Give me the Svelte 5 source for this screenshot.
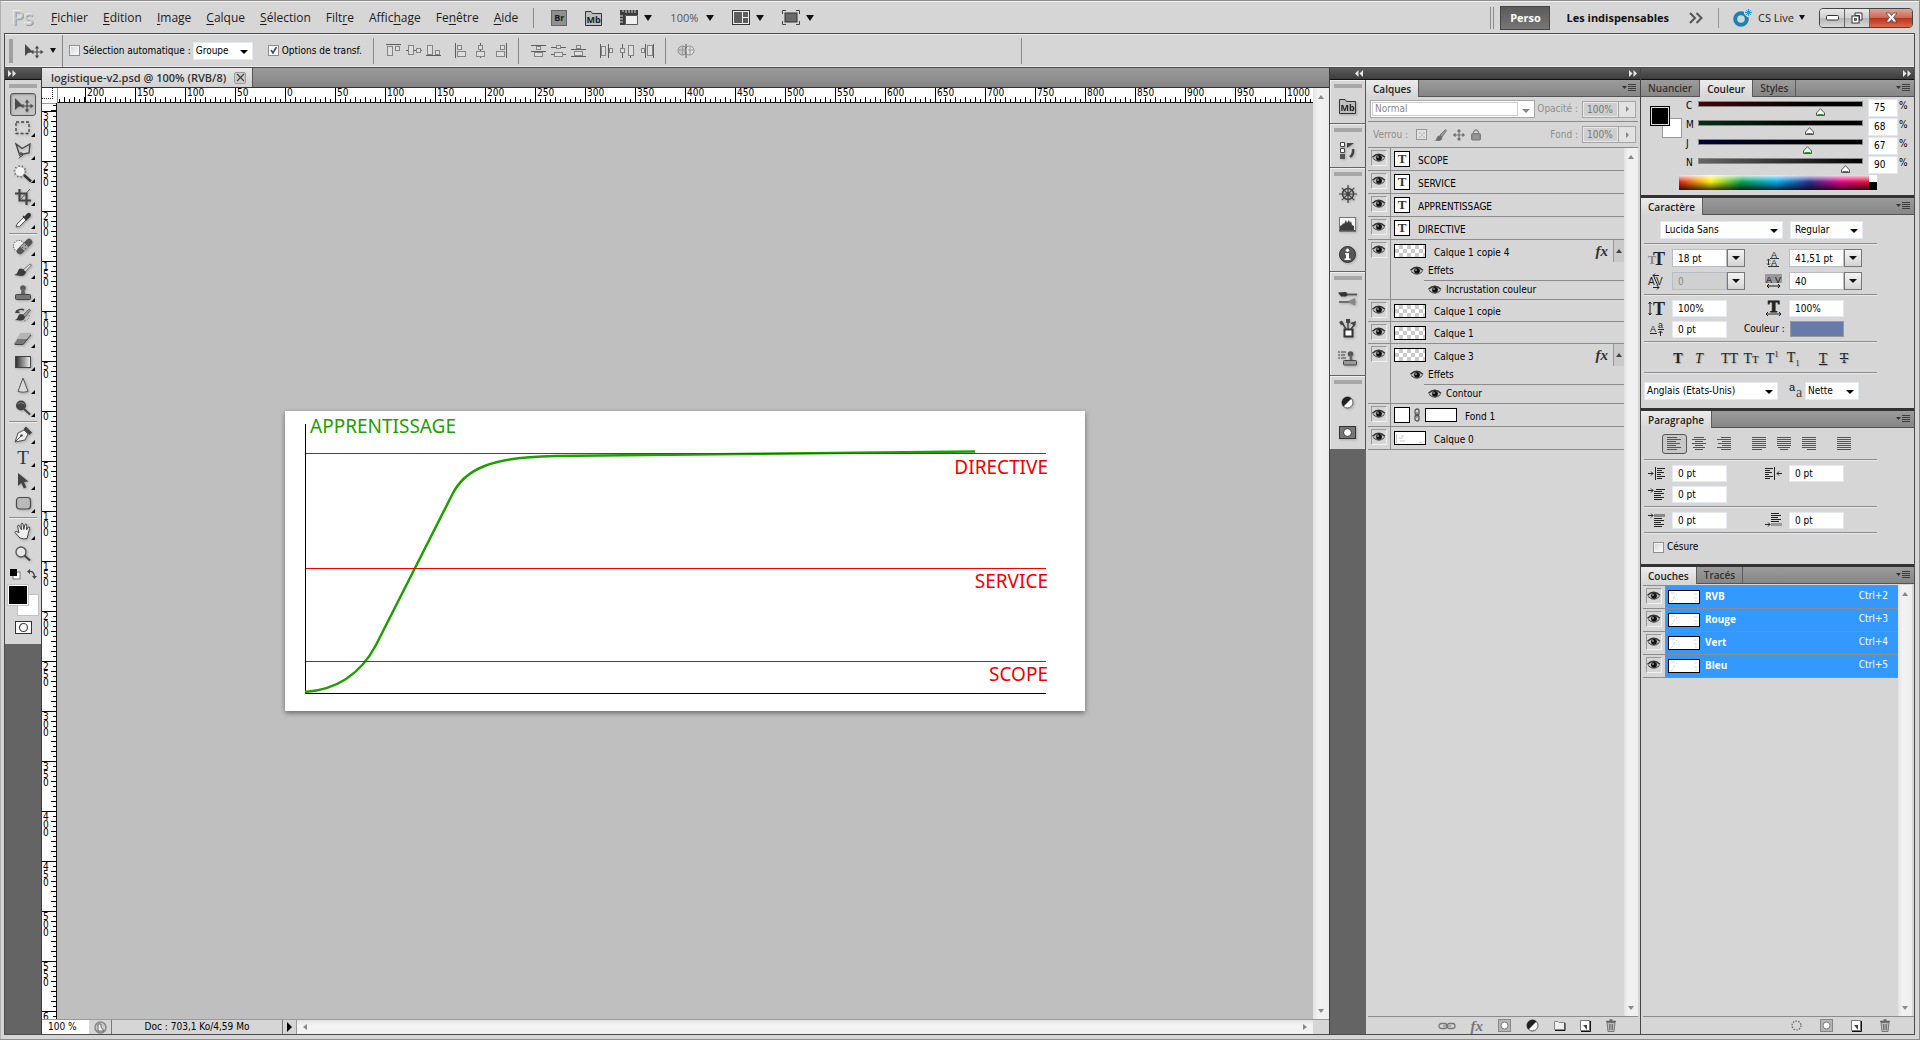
<script>
  const menus = [
    ['', 'F', 'ichier'], ['', 'E', 'dition'], ['', 'I', 'mage'], ['', 'C', 'alque'], ['', 'S', 'élection'],
    ['Filt', 'r', 'e'], ['Affic', 'h', 'age'], ['Fe', 'n', 'être'], ['', 'A', 'ide']
  ];

  const box = (x, y, w, h) =>
    `<rect x="${x + 0.5}" y="${y + 0.5}" width="${w - 1}" height="${h - 1}" fill="#dedede" stroke="#858585"/>`;
  const bar = (x, y, w, h, c = '#5e5e5e') => `<rect x="${x}" y="${y}" width="${w}" height="${h}" fill="${c}"/>`;
  const textLines = (widths, mode, c = '#555') =>
    widths.map((w, i) => {
      const x = mode === 'l' ? 0 : mode === 'r' ? 14 - w : (14 - w) / 2;
      return bar(x, i * 2, w, 1, c);
    }).join('');

  // name: [width, height, markup]
  const icons = {
    move: [18, 14, '<path d="M1 0v12l3-3 5-1z" fill="#4a4a4a"/><path d="M13 3v10M8 8h10M11.500 4.500L13 2.500l1.500 2M11.500 11.500L13 13.500l1.500-2M9.500 6.500L7.500 8l2 1.500M16.500 6.500l2 1.500-2 1.500" fill="none" stroke="#4a4a4a" stroke-width="1.2"/>'],
    marquee: [16, 14, '<rect x="1" y="1" width="13" height="11.500" fill="none" stroke="#444" stroke-width="1.300" stroke-dasharray="3 2"/>'],
    lasso: [16, 16, '<path d="M1 1l6 4.500L15 1l-1 9-8 1.500L4 10z" fill="none" stroke="#444" stroke-width="1.300"/><circle cx="6" cy="11.500" r="1.800" fill="none" stroke="#444"/><path d="M6 13l-2 2.500" stroke="#444"/>'],
    wand: [20, 18, '<circle cx="7" cy="6.500" r="4.500" fill="#f3f3f3"/><circle cx="7" cy="6.500" r="5.500" fill="none" stroke="#555" stroke-width="1.800" stroke-dasharray="1 2.400"/><path d="M11 10l7 6.500" stroke="#333" stroke-width="2.400"/>'],
    crop: [16, 16, '<path d="M4.500 0v11.500H16M0 4.500h11.500V16" fill="none" stroke="#444" stroke-width="2.200"/><path d="M5 11L15 0" stroke="#555"/>'],
    dropper: [16, 16, '<path d="M1 15l1-3 7-7 2.500 2.500-7 7z" fill="#f2f2f2" stroke="#555"/><path d="M8 4l4 4M9.500 5.500l3-3.500q1.500-1 2.500 0 .8 1-.3 2.500L11 8z" fill="#333" stroke="#333" stroke-width="1.300"/>'],
    heal: [20, 17, '<circle cx="6" cy="8" r="5.500" fill="#eee" stroke="#333" stroke-dasharray="1 1.500"/><path d="M7 13l9-9" stroke="#555" stroke-width="6.500" stroke-linecap="round"/><path d="M9.500 11l4-4" stroke="#a5a5a5" stroke-width="6"/><path d="M9 9l1 1M12 7l1 1M12 10l1 1" stroke="#555"/>'],
    brush: [18, 14, '<path d="M9 7l7-6 1.500 1L11 9z" fill="#ddd" stroke="#777"/><path d="M0 12q3-.5 4-4t5-2l3 3q-1 4-5 4z" fill="#3c3c3c"/>'],
    stamp: [16, 16, '<circle cx="8" cy="3" r="2.800" fill="#5a5a5a"/><path d="M6.800 4h2.400l1 5H5.800z" fill="#666"/><rect x=".5" y="9.500" width="15" height="5" rx="1" fill="#777" stroke="#444"/>'],
    history: [18, 15, '<path d="M2 4q4-4 8-2" fill="none" stroke="#444" stroke-width="1.500"/><path d="M1 5l5 0-3-3.500z" fill="#444"/><path d="M9 7l6-6 1.500 1L11 9z" fill="#999" stroke="#555" stroke-width=".7"/><path d="M0 12q3 0 4-3.500t5-2l2 2.500q-1 4-5 3.500z" fill="#3c3c3c"/><path d="M15 7q1 5-5 6" fill="none" stroke="#555" stroke-dasharray="1 1.500"/>'],
    eraser: [18, 14, '<path d="M0 12l7-11h10l-5 8.500L9 13H1z" fill="#777"/><path d="M7 1h10l-4 6H3z" fill="#b5b5b5"/><path d="M1 12.500h8L17 3" fill="none" stroke="#444"/>'],
    gradient: [16, 12, '<defs><linearGradient id="tool-gradient"><stop stop-color="#2b2b2b"/><stop offset="1" stop-color="#f4f4f4"/></linearGradient></defs><rect x=".5" y=".5" width="15" height="11" fill="url(#tool-gradient)" stroke="#444"/>'],
    blur: [12, 16, '<path d="M6 1l5 13.500q-5 1.500-10 0z" fill="#dcdcdc" stroke="#555"/>'],
    dodge: [16, 16, '<circle cx="6" cy="5.500" r="5" fill="#444"/><path d="M2.500 4q3-3 7 0" stroke="#888" fill="none"/><path d="M9 9l6 5.500" stroke="#444" stroke-width="1.800"/>'],
    pen: [18, 17, '<path d="M1 16l3-9 6-3 4 4-3 6z" fill="#efefef" stroke="#555"/><path d="M1 16l6-6" stroke="#555"/><circle cx="7.500" cy="9.500" r="1.200" fill="#444"/><path d="M9.500 3l2.500-2.500 6 6L15.500 9z" fill="#444"/>'],
    select: [12, 16, '<path d="M1 0v13l3.200-3 2.600 5.500 2.500-1.200L7 9l4.500-.5z" fill="#444"/>'],
    shape: [15, 13, '<rect x=".5" y=".5" width="14" height="11.500" rx="3" fill="#b9b9b9" stroke="#4a4a4a" stroke-width="1.200"/>'],
    hand: [18, 18, '<path d="M6 16L1 10.500q0-1.800 2-1l2 1.500L3.500 4Q4 2.500 5.200 3.500L7.500 8 7 2q.8-1.500 2 0l.8 5.500L11 2.500q1-1.200 1.800.2L12.500 8l1.800-3q1.400-.5 1.500 1l-1.500 5.500L13 16.500q-3.500 1-7-.5z" fill="#f0f0f0" stroke="#444"/>'],
    zoom: [16, 16, '<circle cx="6" cy="6" r="5" fill="#e6e6e6" stroke="#555" stroke-width="1.300"/><path d="M9.500 9.500l5.500 5" stroke="#444" stroke-width="2"/>'],
    reset: [10, 10, '<rect x="3" y="3" width="7" height="7" fill="#fff" stroke="#777"/><rect width="7" height="7" fill="#000"/>'],
    swap: [10, 10, '<path d="M2 2.500q5-1 5.500 5" fill="none" stroke="#444" stroke-width="1.400"/><path d="M0 2.500L3 0v5zM5 7h5L7.500 10z" fill="#444"/>'],
    quick: [17, 13, '<rect x=".5" y=".5" width="16" height="12" fill="#fff" stroke="#333"/><circle cx="8.500" cy="6.500" r="4" fill="#fff" stroke="#444" stroke-width="1.200"/>'],

    ruler: [18, 15, '<path d="M0 0h18v5H5v10H0z" fill="#3c3c3c"/><path d="M5.500 5.500h12v9h-12z" fill="#f0f0f0" stroke="#555"/><path d="M3 0v2M6 0v3M9 0v3M12 0v3M15 0v3M0 6h3M0 9h3M0 12h3" stroke="#ddd"/>'],
    arrange: [18, 15, '<rect x=".5" y=".5" width="17" height="14" fill="#eee" stroke="#333"/><path d="M2 2h8v11H2zM11 2h5v5h-5zM11 8h5v5h-5z" fill="#5d5d5d"/>'],
    screen: [18, 15, '<path d="M.5 4V.5H4M14 .5h3.500V4M17.500 11v3.500H14M4 14.500H.5V11" fill="none" stroke="#444"/><rect x="3" y="3" width="12" height="9" fill="#6b6b6b" stroke="#333"/>'],
    live: [20, 19, '<circle cx="8" cy="11" r="5.800" fill="none" stroke="#1c82b0" stroke-width="4"/><path d="M15.500 0v9M11 4.500h9M12.500 1.500l6 6M18.500 1.500l-6 6" stroke="#d6d6d6" stroke-width="3"/><path d="M15.500 1v7M12 4.500h7M13 2l5 5M18 2l-5 5" stroke="#1c9bd0"/>'],
    more: [14, 12, '<path d="M1 1l5 5-5 5M7.500 1l5 5-5 5" fill="none" stroke="#555" stroke-width="2"/>'],
    min: [13, 6, '<rect x=".5" y=".5" width="12" height="4.500" rx="1" fill="#fff" stroke="#333"/>'],
    restore: [12, 12, '<path d="M4 1h7v7H8.500V3.500H4z" fill="#fff" stroke="#333"/><rect x="1" y="4" width="7" height="7" fill="#fff" stroke="#333"/><rect x="3.500" y="6.500" width="2" height="2" fill="#777" stroke="#333" stroke-width=".7"/>'],
    close: [13, 11, '<path d="M1 1h3.500L6.500 3.500 8.500 1H12L8.500 5.500 12 10H8.500L6.500 7.500 4.500 10H1L4.500 5.500z" fill="#fff" stroke="#444" stroke-width=".8"/>'],

    alTop: [16, 13, bar(0, 0, 15, 1) + box(1, 2, 6, 10) + box(9, 2, 5, 5)],
    alMid: [16, 13, bar(0, 6, 16, 1) + box(2, 1, 6, 10) + box(10, 4, 5, 5)],
    alBot: [16, 13, bar(0, 11, 15, 1) + box(1, 1, 6, 10) + box(9, 6, 5, 5)],
    alLeft: [12, 15, bar(0, 0, 1, 15) + box(2, 2, 5, 5) + box(2, 8, 9, 6)],
    alCen: [12, 15, bar(5, 0, 1, 15) + box(3, 2, 5, 5) + box(1, 8, 9, 6)],
    alRight: [12, 15, bar(11, 0, 1, 15) + box(5, 2, 5, 5) + box(1, 8, 9, 6)],
    diTop: [16, 14, bar(0, 1, 15, 1) + box(5, 2, 5, 4) + bar(0, 7, 15, 1) + box(3, 8, 9, 5)],
    diMid: [16, 14, bar(0, 3, 15, 1) + box(5, 1, 5, 4) + bar(0, 10, 15, 1) + box(3, 8, 9, 5)],
    diBot: [16, 14, bar(0, 5, 15, 1) + box(5, 1, 5, 4) + bar(0, 12, 15, 1) + box(3, 7, 9, 5)],
    diLeft: [14, 14, bar(0, 0, 1, 14) + box(1, 2, 5, 10) + bar(8, 0, 1, 14) + box(9, 4, 4, 5)],
    diCen: [14, 14, bar(2, 0, 1, 14) + box(0, 4, 5, 5) + bar(10, 1, 1, 13) + box(8, 1, 6, 11)],
    diRight: [14, 14, bar(5, 0, 1, 14) + box(1, 4, 4, 5) + bar(13, 0, 1, 14) + box(7, 1, 6, 11)],
    auto: [16, 14, '<circle cx="4.500" cy="6.500" r="4.500" fill="#c8c8c8" stroke="#8a8a8a"/><circle cx="11.500" cy="6.500" r="4.500" fill="#e2e2e2" stroke="#8a8a8a"/><path d="M1 6h5M10 6h5M4.500 3v8M12 3v8" stroke="#999"/><path d="M8 0v14" stroke="#555"/>'],

    bridge: [17, 16, '<path d="M.5 1.500H6l1.500 2h9v12H.5z" fill="#bdbdbd" stroke="#333"/><text x="8.500" y="13" font-size="9" font-weight="700" font-family="Open Sans,sans-serif" text-anchor="middle" fill="#222">Mb</text>'],
    steps: [15, 17, '<path d="M.5 .5h4v4h-4zM.5 6.500h4v4h-4z" fill="#fff" stroke="#444"/><rect y="12" width="5" height="5" fill="#555"/><path d="M10 15q4-3 3-8" fill="none" stroke="#444" stroke-width="2.500"/><path d="M7 6V1h7z" fill="#444"/>'],
    helm: [18, 18, '<circle cx="9" cy="9" r="5.500" fill="none" stroke="#444" stroke-width="1.500"/><circle cx="9" cy="9" r="2" fill="#444"/><path d="M9 0v18M0 9h18M2.800 2.800l12.400 12.400M15.200 2.800L2.800 15.200" stroke="#444" stroke-width="1.200"/>'],
    histo: [17, 14, '<rect x=".5" y=".5" width="16" height="13" fill="#f4f4f4" stroke="#777"/><path d="M1 13V9l2-1 1-2 1 1 2-4 1 3 2-3 1 3 1-2 1 4 2 1v4z" fill="#3d3d3d"/><path d="M0 14h17" stroke="#333"/>'],
    info: [17, 17, '<circle cx="8.500" cy="8.500" r="8" fill="#555" stroke="#333"/><circle cx="8.500" cy="4.200" r="1.700" fill="#fff"/><path d="M6 7h4v5.500h1.500V14H5.500v-1.500H7V8.500H6z" fill="#fff"/>'],
    brushes: [19, 15, '<path d="M0 1.500l8-.5 2 2.500-2 2H3z" fill="#333"/><path d="M9 3.500h10" stroke="#555" stroke-width="1.800"/><path d="M1 11h11" stroke="#666" stroke-width="1.800"/><path d="M11 9.500l6-2.500q1.500 4 0 7.500L11 12z" fill="#888"/>'],
    pot: [17, 18, '<path d="M5.500 10.500h8v7h-8z" fill="#fff" stroke="#333" stroke-width="2"/><path d="M7 10L2 2M9 10V3M12 10l4-5" stroke="#444" stroke-width="1.500"/><path d="M0 3l2 3 3-1L3 2zM7 0h4v4H7zM11 4l6-2-1 5z" fill="#444"/>'],
    cloneSrc: [19, 16, '<path d="M0 2h2M0 5h2M0 8h2M3 2h5M3 5h4M3 8h5" stroke="#444"/><circle cx="12.500" cy="4" r="2.800" fill="#555"/><path d="M12 5h1.500l1 5h-3z" fill="#666"/><rect x="5.500" y="10.500" width="13" height="4.500" rx="1" fill="#999" stroke="#444"/>'],
    adjust: [13, 13, '<circle cx="6.500" cy="6.500" r="5.500" fill="#fff" stroke="#555"/><path d="M2.500 10.500A5.500 5.500 0 0 1 10.500 2.500z" fill="#222"/>'],
    mask: [17, 13, '<rect x=".5" y=".5" width="16" height="12" fill="#777" stroke="#333"/><circle cx="8.500" cy="6.500" r="4" fill="#fff" stroke="#333"/>'],

    eye: [14, 10, '<path d="M0 4.500Q6-1 13.500 4.500 7 11.500 0 4.500z" fill="#bbb"/><path d="M.5 4.200Q6.500-1.500 13 4.200" fill="none" stroke="#333" stroke-width="1.400"/><path d="M1 5.500Q7 11 12.500 5.500" fill="none" stroke="#444"/><circle cx="7" cy="4.800" r="2.900" fill="#111"/><circle cx="6" cy="4" r=".8" fill="#ddd"/>'],
    lockPx: [12, 12, '<rect x=".5" y=".5" width="10" height="10" fill="#e6e6e6" stroke="#888"/><path d="M3 3h2v2H3zM7 3h2v2H7zM5 5h2v2H5zM3 7h2v2H3zM7 7h2v2H7z" fill="#c4c4c4"/>'],
    lockBrush: [13, 12, '<path d="M6 6l5.500-5.500 1 1L8 8z" fill="#888" stroke="#666"/><path d="M0 11.500q2.500-.5 3-3t3.500-2L8.500 9q-1 3-4 3z" fill="#555"/>'],
    lockAll: [10, 12, '<path d="M2.500 5V3q2.500-4 5 0v2" fill="none" stroke="#777" stroke-width="1.300"/><rect x=".5" y="4.500" width="9" height="6.500" rx="1" fill="#777" stroke="#666"/><path d="M2 7h6M2 9h6" stroke="#999"/>'],
    lockMove: [12, 12, '<path d="M6 1v10M1 6h10M4.500 2.500L6 .800l1.500 1.700M4.500 9.500L6 11.200l1.500-1.700M2.500 4.500L.8 6l1.700 1.500M9.500 4.500L11.200 6 9.500 7.500" fill="none" stroke="#555" stroke-width="1.200"/>'],
    chain: [8, 14, '<rect x="2" y="1" width="4" height="6" rx="2" fill="none" stroke="#555" stroke-width="1.300"/><rect x="2" y="7" width="4" height="6" rx="2" fill="none" stroke="#555" stroke-width="1.300"/><path d="M4 4v6" stroke="#555"/>'],
    link: [18, 8, '<rect x="1" y="1.500" width="8" height="5" rx="2.500" fill="none" stroke="#777" stroke-width="1.300"/><rect x="9" y="1.500" width="8" height="5" rx="2.500" fill="none" stroke="#777" stroke-width="1.300"/><path d="M5 4h8" stroke="#777"/>'],
    maskBtn: [13, 13, '<rect x=".5" y=".5" width="12" height="12" fill="#b5b5b5" stroke="#888"/><circle cx="6.500" cy="6.500" r="3.500" fill="#fff" stroke="#777"/>'],
    folder: [11, 11, '<path d="M.5 1.500H4l1 1h5.500v7H.5z" fill="#eee" stroke="#888"/><path d="M1 10.500h10V3" fill="none" stroke="#111"/>'],
    page: [11, 12, '<path d="M.5 .5h9v10h-9z" fill="#fff" stroke="#777"/><path d="M10.500 1v10.500H1" fill="none" stroke="#111"/><path d="M3 5h4v5z" fill="#444"/>'],
    trash: [10, 13, '<path d="M1 3.500h8l-1 9H2z" fill="#bbb" stroke="#777"/><path d="M3.500 5v6M5 5v6M6.500 5v6" stroke="#666" stroke-width=".8"/><path d="M0 2.500h10M3.500 1h3" stroke="#666" stroke-width="1.300"/>'],
    dotted: [11, 11, '<circle cx="5.500" cy="5.500" r="4.500" fill="none" stroke="#666" stroke-width="1.200" stroke-dasharray="1.600 1.200"/>'],
    clock: [13, 13, '<circle cx="6.500" cy="6.500" r="5.500" fill="#ccc" stroke="#888" stroke-width="1.500"/><path d="M4 3h3v3l3 4H4z" fill="#f2f2f2" stroke="#666"/>'],

    size: [17, 15, '<text x="0" y="13" font-size="12" font-family="Liberation Serif,serif" font-weight="700" fill="#888">T</text><text x="5" y="14" font-size="18" font-family="Liberation Serif,serif" font-weight="700" fill="#222">T</text>'],
    leading: [13, 17, '<text x="4" y="8" font-size="9" font-family="Liberation Sans,sans-serif" fill="#222">A</text><text x="4" y="16" font-size="9" font-family="Liberation Sans,sans-serif" fill="#222">A</text><path d="M3 8.500h9M1 16.500h11M1.500 9v6M0 10.500L1.500 9 3 10.500M0 13.500L1.500 15 3 13.500" fill="none" stroke="#333"/>'],
    kern: [17, 17, '<text x="0" y="12" font-size="10" font-family="Liberation Sans,sans-serif" fill="#222">A</text><text x="8" y="12" font-size="10" font-family="Liberation Sans,sans-serif" fill="#222">V</text><path d="M5 2.500h6M5 2.500l2-2M5 2.500l2 2M5 14.500h6M11 14.500l-2-2M11 14.500l-2 2M6 4l4 9" fill="none" stroke="#222"/>'],
    track: [17, 14, '<rect width="17" height="9" fill="#999"/><text x="1" y="8.500" font-size="9" font-family="Liberation Sans,sans-serif" fill="#111">A</text><text x="10" y="8.500" font-size="9" font-family="Liberation Sans,sans-serif" fill="#111">V</text><path d="M2 12h13M4 10l-2 2 2 2M13 10l2 2-2 2" fill="none" stroke="#111"/>'],
    vscale: [17, 15, '<path d="M2 1v13M.5 3L2 1l1.500 2M.5 12L2 14l1.500-2" fill="none" stroke="#222"/><text x="5" y="14" font-size="18" font-family="Liberation Serif,serif" font-weight="700" fill="#222">T</text>'],
    hscale: [17, 16, '<text x="3" y="12" font-size="17" font-family="Liberation Serif,serif" font-weight="700" fill="#222" stroke="#222">T</text><path d="M1 14h15M3 12l-2 2 2 2M14 12l2 2-2 2" fill="none" stroke="#222"/>'],
    shift: [14, 15, '<text x="0" y="10" font-size="9" font-family="Liberation Sans,sans-serif" fill="#222">A</text><text x="8" y="6" font-size="9" font-family="Liberation Sans,sans-serif" fill="#222">a</text><path d="M0 11.500h7M8 7.500h6M10.500 9v5M8.500 11l2-2 2 2" fill="none" stroke="#222"/>'],
    aa: [14, 14, '<text x="0" y="7" font-size="11" font-family="Liberation Sans,sans-serif" fill="#111">a</text><text x="7" y="13" font-size="14" font-family="Liberation Serif,serif" fill="#444">a</text>'],

    pLeft: [15, 14, textLines([10, 14, 9, 13, 9, 14, 10], 'l')],
    pCenter: [15, 14, textLines([10, 14, 8, 14, 8, 12, 8], 'c')],
    pRight: [15, 14, textLines([10, 14, 9, 13, 9, 14, 10], 'r')],
    jLeft: [15, 14, textLines([14, 14, 14, 14, 14, 14, 10], 'l')],
    jCenter: [15, 14, textLines([14, 14, 14, 14, 14, 12, 8], 'c')],
    jRight: [15, 14, textLines([14, 14, 14, 14, 14, 14, 9], 'r')],
    jAll: [15, 14, textLines([14, 14, 14, 14, 14, 14, 14], 'l')],
    inLeft: [17, 13, '<path d="M0 6.500h5M3 4.500l2 2-2 2M7.500 0v13" fill="none" stroke="#222"/><path d="M9 1.500h8M9 3.500h5M9 5.500h7M9 7.500h4M9 9.500h8M9 11.500h5" stroke="#222"/>'],
    inRight: [17, 13, '<path d="M17 6.500h-5M14 4.500l-2 2 2 2M9.500 0v13" fill="none" stroke="#222"/><path d="M0 1.500h8M0 3.500h5M0 5.500h7M0 7.500h4M0 9.500h8M0 11.500h5" stroke="#222"/>'],
    inFirst: [17, 13, '<path d="M0 2.500h5M3 .5l2 2-2 2" fill="none" stroke="#222"/><path d="M8 1.500h9M6 3.500h8M6 5.500h10M6 7.500h7M6 9.500h10M6 11.500h8" stroke="#222"/>'],
    before: [17, 14, '<path d="M0 2.500h5M3 .5l2 2-2 2" fill="none" stroke="#222"/><rect x="6" y="1" width="11" height="3" fill="#888"/><path d="M6 5.500h8M6 7.500h10M6 9.500h7M6 11.500h10M6 13.500h8" stroke="#222"/>'],
    after: [17, 14, '<path d="M0 11.500h5M3 9.500l2 2-2 2" fill="none" stroke="#222"/><rect x="6" y="10" width="11" height="3" fill="#999"/><path d="M6 .5h8M6 2.500h10M6 4.500h7M6 6.500h10M6 8.500h8" stroke="#222"/>']
  };

  const toolGroups = [
    [['move', 'Déplacement'], ['marquee', 'Rectangle de sélection'], ['lasso', 'Lasso polygonal'], ['wand', 'Baguette magique'], ['crop', 'Recadrage'], ['dropper', 'Pipette']],
    [['heal', 'Correcteur'], ['brush', 'Pinceau'], ['stamp', 'Tampon'], ['history', 'Forme d’historique'], ['eraser', 'Gomme'], ['gradient', 'Dégradé'], ['blur', 'Goutte d’eau'], ['dodge', 'Densité']],
    [['pen', 'Plume'], ['T', 'Texte'], ['select', 'Sélection de tracé'], ['shape', 'Rectangle arrondi']],
    [['hand', 'Main'], ['zoom', 'Zoom']]
  ];

  const alignGroups = [
    { key: 'align', sets: [['alTop', 'alMid', 'alBot'], ['alLeft', 'alCen', 'alRight']] },
    { key: 'spread', sets: [['diTop', 'diMid', 'diBot'], ['diLeft', 'diCen', 'diRight']] },
    { key: 'auto', sets: [['auto']] }
  ];

  const dockGroups = [['bridge'], ['steps'], ['helm', 'histo', 'info'], ['brushes', 'pot', 'cloneSrc'], ['adjust', 'mask']];

  const layers = [
    { name: 'SCOPE', kind: 'text' },
    { name: 'SERVICE', kind: 'text' },
    { name: 'APPRENTISSAGE', kind: 'text' },
    { name: 'DIRECTIVE', kind: 'text' },
    { name: 'Calque 1 copie 4', kind: 'pixel', effect: 'Incrustation couleur' },
    { name: 'Calque 1 copie', kind: 'pixel', low: true },
    { name: 'Calque 1', kind: 'pixel', low: true },
    { name: 'Calque 3', kind: 'pixel', effect: 'Contour' },
    { name: 'Fond 1', kind: 'fill' },
    { name: 'Calque 0', kind: 'drawn' }
  ];

  let inks = $state([
    { id: 'C', value: 75, tone: 'cyan' },
    { id: 'M', value: 68, tone: 'magenta' },
    { id: 'J', value: 67, tone: 'yellow' },
    { id: 'N', value: 90, tone: 'black' }
  ]);

  const channels = [['RVB', 'Ctrl+2'], ['Rouge', 'Ctrl+3'], ['Vert', 'Ctrl+4'], ['Bleu', 'Ctrl+5']];

  // One ruler label per 50 px, as many as the rulers have room for
  const LEAD_X = 27;
  const LEAD_Y = 8;
  let rulerW = $state(0);
  let rulerH = $state(0);
  const marks = (room, start) =>
    Array.from({ length: Math.max(0, Math.ceil(room / 50)) }, (_, i) => Math.abs(i * 50 - start));
  const hMarks = $derived(marks(rulerW - LEAD_X, 200));
  const vMarks = $derived(marks(rulerH - LEAD_Y, 300));
</script>

{#snippet icon(name)}
  {@const [w, h, art] = icons[name]}
  <svg class="icon" width={w} height={h} viewBox="0 0 {w} {h}" aria-hidden="true">{@html art}</svg>
{/snippet}

{#snippet caret()}<i class="caret"></i>{/snippet}

{#snippet chevrons(dir)}
  <svg class="icon" width="8" height="7" viewBox="0 0 8 7" aria-hidden="true">
    {#if dir === 'left'}
      <path d="M3.500 0v7L0 3.500zM8 0v7L4.500 3.500z" fill="#e6e6e6" />
    {:else}
      <path d="M0 0v7l3.500-3.500zM4.500 0v7L8 3.500z" fill="#e6e6e6" />
    {/if}
  </svg>
{/snippet}

{#snippet tabs(names, active)}
  <div class="tabs" role="tablist">
    {#each names as n}
      <button class="tab" class:active={n === active} role="tab" aria-selected={n === active}>{n}</button>
    {/each}
    <button class="panel-menu" aria-label="Menu du panneau">
      <svg class="icon" width="14" height="8" viewBox="0 0 14 8"><path d="M0 2h5L2.500 5z" fill="#333" /><path d="M6 .5h8M6 2.500h8M6 4.500h8M6 6.500h8" stroke="#3c3c3c" /></svg>
    </button>
  </div>
{/snippet}

{#snippet vscroll()}
  <div class="vscroll"><i class="up"></i><i class="down"></i></div>
{/snippet}

{#snippet eye()}
  <button class="eye" aria-label="Visibilité">{@render icon('eye')}</button>
{/snippet}

{#snippet pick(label, value, size)}
  <span class="pick {size}">
    <select aria-label={label}><option>{value}</option></select>
  </span>
{/snippet}

{#snippet combo(art, label, value, off)}
  <label class="metric">
    <span class="glyph">{@render icon(art)}</span>
    <input aria-label={label} {value} disabled={off} />
    <button class="drop" aria-label="Choisir : {label}">{@render caret()}</button>
  </label>
{/snippet}

{#snippet field(art, label, value)}
  <label class="metric">
    <span class="glyph">{@render icon(art)}</span>
    <input aria-label={label} {value} />
  </label>
{/snippet}

<div class="app">
  <header class="appbar">
    <span class="logo">Ps</span>
    <nav class="menus">
      {#each menus as [a, k, b]}
        <button>{a}<u>{k}</u>{b}</button>
      {/each}
    </nav>
    <div class="launch">
      <button class="br">Br</button>
      <button class="mb" aria-label="Mini Bridge">{@render icon('bridge')}</button>
      <button class="view" aria-label="Extras">{@render icon('ruler')}{@render caret()}</button>
      <button class="view zoomed">100%{@render caret()}</button>
      <button class="view" aria-label="Disposition">{@render icon('arrange')}{@render caret()}</button>
      <button class="view" aria-label="Mode d’écran">{@render icon('screen')}{@render caret()}</button>
    </div>
    <div class="spaces">
      <button class="perso">Perso</button>
      <button class="space">Les indispensables</button>
      <button class="others" aria-label="Autres espaces">{@render icon('more')}</button>
    </div>
    <button class="live">{@render icon('live')}<span>CS Live</span>{@render caret()}</button>
    <div class="winbtns">
      <button aria-label="Réduire">{@render icon('min')}</button>
      <button aria-label="Restaurer">{@render icon('restore')}</button>
      <button class="quit" aria-label="Fermer">{@render icon('close')}</button>
    </div>
  </header>

  <div class="options">
    <i class="vgrip"></i>
    <button class="current" aria-label="Outil Déplacement">{@render icon('move')}{@render caret()}</button>
    <div class="opt-main">
      <label class="check"><input type="checkbox" /><span>Sélection automatique :</span></label>
      {@render pick('Sélection automatique', 'Groupe', 'group')}
      <label class="check second"><input type="checkbox" checked /><span>Options de transf.</span></label>
    </div>
    {#each alignGroups as g}
      <div class="aligns {g.key}">
        {#each g.sets as set}
          <div class="set">
            {#each set as name}<button aria-label={name}>{@render icon(name)}</button>{/each}
          </div>
        {/each}
      </div>
    {/each}
    <div class="opt-rest"></div>
  </div>

  <main class="work">
    <aside class="toolcol">
      <div class="strip left">{@render chevrons('right')}</div>
      <div class="toolbox">
        <i class="hgrip"></i>
        {#each toolGroups as group}
          <div class="tools">
            {#each group as [name, label]}
              <button class="tool" class:on={name === 'move'} class:plain={name === 'move' || name === 'zoom'} aria-label={label}>
                {#if name === 'T'}<span class="type">T</span>{:else}{@render icon(name)}{/if}
              </button>
            {/each}
          </div>
        {/each}
        <div class="mini">
          <button aria-label="Couleurs par défaut">{@render icon('reset')}</button>
          <button aria-label="Permuter">{@render icon('swap')}</button>
        </div>
        <div class="swatches">
          <button class="bg" aria-label="Arrière-plan"></button>
          <button class="fg" aria-label="Premier plan"></button>
        </div>
        <button class="quick" aria-label="Mode Masque">{@render icon('quick')}</button>
      </div>
    </aside>

    <section class="doc">
      <div class="doctabs">
        <div class="doctab">
          <span>logistique-v2.psd @ 100% (RVB/8)</span>
          <button aria-label="Fermer le document">
            <svg class="icon" width="7" height="7" viewBox="0 0 7 7"><path d="M0 0l7 7M7 0L0 7" stroke="#444" stroke-width="1.300" /></svg>
          </button>
        </div>
      </div>
      <div class="stage">
        <div class="corner"><i></i></div>
        <div class="hruler" bind:clientWidth={rulerW}>
          <span class="lead"></span>
          {#each hMarks as m}<span>{m}</span>{/each}
        </div>
        <div class="vruler" bind:clientHeight={rulerH}>
          <span class="lead"></span>
          {#each vMarks as m}<span><b>{m}</b></span>{/each}
        </div>
        <div class="canvas">
          <svg class="art" width="800" height="300" viewBox="0 0 800 300" role="img" aria-label="Courbe d’apprentissage">
            <path d="M20.500 13V282.500H761" fill="none" stroke="#000" />
            <path d="M20 281C48 279 74 266 91 234L167 84C180 57 208 46 270 45L690 40.500" fill="none" stroke="#1ea000" stroke-width="2.500" />
            <path d="M21 42.500H761M21 157.500H761M21 250.500H761" stroke="#f00000" />
            <text x="25" y="22" fill="#1ea000">APPRENTISSAGE</text>
            <g fill="#f00000" text-anchor="end">
              <text x="763" y="63">DIRECTIVE</text>
              <text x="763" y="177">SERVICE</text>
              <text x="763" y="270">SCOPE</text>
            </g>
          </svg>
        </div>
        {@render vscroll()}
      </div>
      <footer class="status">
        <input aria-label="Zoom" value="100 %" />
        <span class="clock">{@render icon('clock')}</span>
        <span class="info">Doc : 703,1 Ko/4,59 Mo</span>
        <button aria-label="Options d’état"><i class="play"></i></button>
        <div class="hscroll"><i class="lt"></i><i class="rt"></i></div>
        <i class="nook"></i>
      </footer>
    </section>

    <aside class="dock">
      <div class="strip right">{@render chevrons('left')}</div>
      {#each dockGroups as group}
        <div class="dockgroup">
          <i class="hgrip"></i>
          {#each group as name}<button aria-label={name}>{@render icon(name)}</button>{/each}
        </div>
      {/each}
    </aside>

    <aside class="layerscol">
      <div class="strip right">{@render chevrons('right')}</div>
      {@render tabs(['Calques'], 'Calques')}
      <div class="lp">
        <div class="lrow first">
          <span class="blend"><select aria-label="Mode de fusion" disabled><option>Normal</option></select></span>
          <label>Opacité :<input value="100%" disabled /></label><button class="nudge" aria-label="Régler l’opacité" disabled><i></i></button>
        </div>
        <div class="lrow">
          <span class="dim">Verrou :</span>
          <span class="locks">{@render icon('lockPx')}{@render icon('lockBrush')}{@render icon('lockMove')}{@render icon('lockAll')}</span>
          <label>Fond :<input value="100%" disabled /></label><button class="nudge" aria-label="Régler le fond" disabled><i></i></button>
        </div>
        <div class="layerwrap">
          <ul class="layers">
            {#each layers as l}
              <li class:low={l.low}>
                <div class="eyecell">{@render eye()}</div>
                <div class="lbody">
                  <div class="lmain">
                    {#if l.kind === 'text'}
                      <span class="thumb sq">T</span>
                    {:else if l.kind === 'fill'}
                      <span class="thumb sq"></span>{@render icon('chain')}<span class="thumb wide"></span>
                    {:else if l.kind === 'drawn'}
                      <span class="thumb wide"><svg class="icon" width="30" height="11" viewBox="0 0 30 11"><path d="M1.500 1v9M6 3h3M4 5h4M5 8h5M24 9.500h3" stroke="#bbb" stroke-width=".8" /></svg></span>
                    {:else}
                      <span class="thumb wide checker"></span>
                    {/if}
                    <span class="lname">{l.name}</span>
                    {#if l.effect}<em class="fx">fx</em><button class="fold" aria-label="Replier les effets"><i></i></button>{/if}
                  </div>
                  {#if l.effect}
                    <div class="fxhead">{@render icon('eye')}<span>Effets</span></div>
                    <div class="fxitem">{@render icon('eye')}<span>{l.effect}</span></div>
                  {/if}
                </div>
              </li>
            {/each}
          </ul>
          {@render vscroll()}
        </div>
        <div class="pfoot">
          <button aria-label="Lier">{@render icon('link')}</button>
          <button class="fxbtn"><em>fx</em></button>
          <button aria-label="Masque">{@render icon('maskBtn')}</button>
          <button aria-label="Réglage">{@render icon('adjust')}</button>
          <button aria-label="Groupe">{@render icon('folder')}</button>
          <button aria-label="Nouveau calque">{@render icon('page')}</button>
          <button aria-label="Supprimer">{@render icon('trash')}</button>
        </div>
      </div>
    </aside>

    <aside class="sidecol">
      <div class="strip right">{@render chevrons('right')}</div>
      <section class="panel">
        {@render tabs(['Nuancier', 'Couleur', 'Styles'], 'Couleur')}
        <div class="color">
          <div class="chips"><button class="chip back" aria-label="Arrière-plan"></button><button class="chip front" aria-label="Premier plan"></button></div>
          <div class="inks">
            {#each inks as ink}
              <div class="ink">
                <label for="ink-{ink.id}">{ink.id}</label>
                <input id="ink-{ink.id}" class="slide {ink.tone}" type="range" min="0" max="100" bind:value={ink.value} />
                <input class="num" aria-label="Valeur {ink.id}" value={ink.value} /><span>%</span>
              </div>
            {/each}
          </div>
          <div class="spectrum"><i></i></div>
        </div>
      </section>

      <section class="panel">
        {@render tabs(['Caractère'], 'Caractère')}
        <div class="char">
          <div class="cr fonts">{@render pick('Police', 'Lucida Sans', 'family')}{@render pick('Style', 'Regular', 'style')}</div>
          <div class="cr two">{@render combo('size', 'Corps', '18 pt', false)}{@render combo('leading', 'Interligne', '41,51 pt', false)}{@render combo('kern', 'Crénage', '0', true)}{@render combo('track', 'Approche', '40', false)}</div>
          <div class="cr two tight">
            {@render field('vscale', 'Échelle verticale', '100%')}{@render field('hscale', 'Échelle horizontale', '100%')}{@render field('shift', 'Décalage', '0 pt')}
            <label class="tint">Couleur :<button aria-label="Couleur du texte"></button></label>
          </div>
          <div class="cr faces">
            <button><b>T</b></button><button><i>T</i></button>
            <button class="gap">TT</button><button><span>T<small>T</small></span></button><button><span>T<sup>1</sup></span></button><button><span>T<sub>1</sub></span></button>
            <button class="gap"><u>T</u></button><button><s>T</s></button>
          </div>
          <div class="cr lang">{@render pick('Langue', 'Anglais (Etats-Unis)', 'language')}{@render icon('aa')}{@render pick('Lissage', 'Nette', 'smooth')}</div>
        </div>
      </section>

      <section class="panel">
        {@render tabs(['Paragraphe'], 'Paragraphe')}
        <div class="para">
          <div class="cr justs">
            {#each ['pLeft', 'pCenter', 'pRight', 'jLeft', 'jCenter', 'jRight', 'jAll'] as j}
              <button class:on={j === 'pLeft'} class:gap={j === 'jLeft' || j === 'jAll'} aria-label={j}>{@render icon(j)}</button>
            {/each}
          </div>
          <div class="cr two tight">{@render field('inLeft', 'Retrait gauche', '0 pt')}{@render field('inRight', 'Retrait droit', '0 pt')}{@render field('inFirst', 'Retrait première ligne', '0 pt')}</div>
          <div class="cr two tight">{@render field('before', 'Espace avant', '0 pt')}{@render field('after', 'Espace après', '0 pt')}</div>
          <label class="check hyphen"><input type="checkbox" /><span>Césure</span></label>
        </div>
      </section>

      <section class="panel grow">
        {@render tabs(['Couches', 'Tracés'], 'Couches')}
        <div class="chanwrap">
          <ul class="channels">
            {#each channels as [name, key]}
              <li>
                <div class="eyecell">{@render eye()}</div>
                <div class="chan">
                  <span class="thumb wide"><svg class="icon" width="30" height="11" viewBox="0 0 30 11"><path d="M2 1h4M2 10l2-2M4 7l2-3M7 3l1-1M25 2h3M25 6h3M26 9h2" stroke="#ccc" stroke-width=".8" /></svg></span>
                  <b>{name}</b><span>{key}</span>
                </div>
              </li>
            {/each}
          </ul>
          {@render vscroll()}
        </div>
        <div class="pfoot wide">
          <button aria-label="Charger la sélection">{@render icon('dotted')}</button>
          <button aria-label="Mémoriser la sélection">{@render icon('maskBtn')}</button>
          <button aria-label="Nouvelle couche">{@render icon('page')}</button>
          <button aria-label="Supprimer la couche">{@render icon('trash')}</button>
        </div>
      </section>
    </aside>
  </main>
</div>

<style>
  :global(body) { background: #d6d6d6; }
  .app, .app :global(*) { box-sizing: border-box; }
  .app {
    --ui: "DejaVu Sans Condensed", "DejaVu Sans", sans-serif;
    --bar: "Open Sans", "Noto Sans", sans-serif;
    display: flex;
    flex-direction: column;
    height: 100vh;
    overflow: hidden;
    padding: 1px 4px 4px 4px;
    border: solid #8e8e8e;
    border-width: 1px 1px 1px 0;
    box-shadow: inset 1px 0 #b0b0b0, inset 0 1px #f2f2f2;
    background: #d6d6d6;
    font: 10px/12px var(--ui);
    color: #000;
  }
  button, input, select { font: inherit; color: inherit; margin: 0; padding: 0; border: 0; border-radius: 0; background: none; }
  button { display: flex; align-items: center; justify-content: center; white-space: nowrap; }
  input, select { min-width: 0; outline: 0; appearance: none; }
  ul { list-style: none; margin: 0; padding: 0; }
  .icon { display: block; flex: none; overflow: visible; }
  .caret { flex: none; width: 0; height: 0; border: solid transparent; border-width: 5px 3px 0; border-top-color: #111; }

  /* application bar */
  .appbar { display: flex; align-items: center; flex: none; height: 31px; padding: 0 2px 0 8px; font: 12px/16px var(--bar); color: #1c1c1c; }
  .logo { width: 39px; font-size: 20px; line-height: 24px; color: #c9c9c9; text-shadow: 1px 1px #9a9a9a, -1px -1px #eee; }
  .menus { display: flex; gap: 15px; }
  .menus u { text-underline-offset: 2px; }
  .launch { display: flex; align-items: center; gap: 18px; margin-left: 15px; padding-left: 17px; height: 20px; border-left: 1px solid #8a8a8a; }
  .br { width: 16px; height: 16px; background: #8f8f8f; border: 1px solid #666; font-size: 9px; line-height: 12px; font-weight: 700; }
  .view { gap: 6px; }
  .view.zoomed { gap: 8px; color: #555; font-size: 11px; }
  .view .caret { border-width: 6px 4px 0; }
  .spaces { display: flex; align-items: center; gap: 16px; margin-left: auto; height: 22px; padding-left: 6px; border-left: 4px double #8a8a8a; font-size: 11px; font-weight: 700; color: #111; }
  .perso { width: 50px; height: 24px; background: linear-gradient(#5a5a5a, #777); border: 1px solid #444; color: #fff; }
  .others { margin-left: 4px; }
  .live { gap: 5px; height: 20px; margin-left: 15px; padding-left: 14px; border-left: 1px solid #999; font-size: 11px; }
  .winbtns { display: flex; height: 20px; margin-left: 14px; border: 1px solid #444; border-radius: 4px; overflow: hidden; }
  .winbtns button { width: 25px; background: linear-gradient(#e8e8e8, #d0d0d0 50%, #b6b6b6 50%, #d8d8d8); border-right: 1px solid #666; }
  .winbtns .quit { width: 42px; border: 0; background: linear-gradient(#e0a494, #cd6650 50%, #b8321c 50%, #dc6a4c); }

  /* options bar */
  .options { display: flex; align-items: center; flex: none; height: 34px; border: solid #4b4b4b; border-width: 1px 1px 0; box-shadow: inset 0 1px #f0f0f0, inset 0 -1px #ececec; padding-left: 4px; }
  .vgrip { width: 4px; height: 24px; background: radial-gradient(circle, #888 0 1px, transparent 1px) 0 0/2px 2px; opacity: .7; }
  .current { gap: 8px; width: 50px; height: 32px; padding-left: 5px; border-right: 1px solid #888; }
  .opt-main { display: flex; align-items: center; height: 24px; padding: 0 11px 0 6px; }
  .check { display: flex; align-items: center; gap: 3px; }
  .check.second { margin-left: 15px; }
  .check input { width: 11px; height: 11px; border: 1px solid #8e8f8f; background: linear-gradient(135deg, #cfd4d8, #fff); box-shadow: inset 0 0 0 1px #f4f4f4; }
  .check input:checked { background: #fff url("data:image/svg+xml,%3Csvg xmlns='http://www.w3.org/2000/svg' width='9' height='9'%3E%3Cpath d='M2 4l2 3 3.500-6' fill='none' stroke='%23314a8c' stroke-width='1.600'/%3E%3C/svg%3E") center no-repeat; }
  .pick { position: relative; display: block; height: 18px; background: #fff; border: 1px solid #e4e8f0; }
  .pick select { width: 100%; height: 16px; padding: 0 16px 0 4px; }
  .pick::after { content: ""; position: absolute; right: 4px; top: 7px; border: solid transparent; border-width: 4px 4px 0; border-top-color: #000; pointer-events: none; }
  .pick.group { width: 60px; margin-left: 2px; }
  .pick.group select { padding-left: 2px; }
  .aligns { display: flex; gap: 13px; height: 26px; padding: 0 11px 0 12px; border-left: 1px solid #8a8a8a; }
  .set { display: flex; align-items: center; gap: 4px; }
  .align .set:nth-child(2) { gap: 8px; }
  .spread .set:nth-child(2) { gap: 6px; }
  .opt-rest { width: 317px; height: 26px; border-right: 1px solid #8a8a8a; }

  /* workspace columns */
  .work { display: flex; flex: 1; min-height: 0; border: 1px solid #4b4b4b; background: #646464; }
  .strip { display: flex; align-items: center; flex: none; height: 12px; background: linear-gradient(#5c5c5c, #3c3c3c); border-bottom: 1px solid #111; padding: 0 3px; }
  .strip.right { justify-content: flex-end; }
  .hgrip { display: block; width: 28px; height: 4px; background: radial-gradient(circle, #888 0 1px, transparent 1px) 0 0/2px 2px; opacity: .6; }
  .toolcol { flex: none; width: 37px; border-right: 1px solid #3c3c3c; }
  .toolbox { display: flex; flex-direction: column; align-items: center; padding: 4px 0 10px; background: #d6d6d6; }
  .tools { display: flex; flex-direction: column; align-items: center; width: 28px; padding: 1px 0 2px; border-bottom: 1px solid #8c8c8c; box-shadow: 0 1px #eee; }
  .hgrip + .tools { padding-top: 5px; }
  .tools:nth-of-type(4) { border: 0; box-shadow: none; padding-bottom: 0; }
  .tool { position: relative; width: 26px; height: 23px; }
  .tool :global(svg) { filter: drop-shadow(1px 1px 1px #aaa); }
  .tool:not(.plain)::after { content: ""; position: absolute; right: 1px; bottom: 2px; border: solid transparent; border-width: 0 0 4px 4px; border-bottom-color: #000; }
  .tool.on { border: 1px solid #555; border-radius: 3px; background: #c4c4c4; box-shadow: inset 1px 1px 2px #999; }
  .type { font: 19px/20px "Liberation Serif", serif; color: #333; }
  .mini { display: flex; justify-content: space-between; width: 27px; padding-top: 4px; }
  .swatches { position: relative; width: 30px; height: 32px; margin-top: 5px; }
  .swatches button { position: absolute; width: 20px; height: 20px; border: 1px solid #fff; outline: 1px solid #c2c2c2; }
  .swatches .fg { left: 0; top: 1px; background: #000; }
  .swatches .bg { left: 10px; top: 11px; background: #fff; }
  .quick { margin-top: 5px; }

  /* document window */
  .doc { display: flex; flex: 1; flex-direction: column; min-width: 0; border-right: 1px solid #3c3c3c; background: #d6d6d6; }
  .doctabs { display: flex; flex: none; height: 20px; background: linear-gradient(#9a9a9a, #858585); border-bottom: 1px solid #333; }
  .doctab { display: flex; align-items: center; gap: 8px; padding: 0 6px 0 9px; background: linear-gradient(#e6e6e6, #d2d2d2); border-right: 1px solid #555; font: 600 11px/16px var(--bar); color: #333; }
  .doctab button { width: 12px; height: 12px; border: 1px solid #999; border-radius: 2px; background: #ccc; }
  .stage { display: grid; flex: 1; min-height: 0; grid-template: 15px minmax(0, 1fr) / 15px minmax(0, 1fr) 16px; }
  .corner { padding: 0 4px 4px 0; background: #fff; }
  .corner i { display: block; width: 11px; height: 11px; border: dotted #222; border-width: 0 1px 1px 0; }
  .hruler { display: flex; overflow: hidden; background: #fff; border-bottom: 1px solid #111; border-left: 1px solid #999; }
  .hruler span { flex: none; width: 50px; height: 14px; border-left: 1px solid #000; padding-left: 1px; line-height: 10px;
    background: linear-gradient(90deg, transparent 4px, #000 4px) 0 100%/5px 3px repeat-x, linear-gradient(90deg, transparent 9px, #000 9px) 0 100%/10px 5px repeat-x; }
  .hruler .lead { width: 27px; border: 0; background-position: 2px 100%, 7px 100%; }
  .vruler { display: flex; flex-direction: column; overflow: hidden; background: #fff; border-right: 1px solid #111; }
  .vruler span { flex: none; height: 50px; border-top: 1px solid #000;
    background: linear-gradient(transparent 4px, #000 4px) 100% 0/3px 5px repeat-y, linear-gradient(transparent 9px, #000 9px) 100% 0/5px 10px repeat-y; }
  .vruler .lead { height: 8px; border-top-color: #999; background-position: 100% 2px, 100% 7px; }
  .vruler b { display: block; width: 7px; margin-left: 1px; padding-top: 1px; font-weight: 400; line-height: 8px; word-break: break-all; }
  .canvas { display: grid; place-items: center; background: #bfbfbf; overflow: hidden; }
  .art { display: block; background: #fff; box-shadow: 0 2px 5px rgba(0, 0, 0, .45); }
  .art text { font: 19px "Noto Sans", "Open Sans", sans-serif; }
  .stage .vscroll { grid-column: 3; grid-row: 1 / 3; width: 16px; }
  .stage .canvas { grid-column: 2; grid-row: 2; }
  .vscroll { display: flex; flex: none; flex-direction: column; align-items: center; justify-content: space-between; width: 14px; padding: 7px 0 6px; background: linear-gradient(90deg, #e2e2e2, #f2f2f2 30%, #eee); }
  .vscroll i, .hscroll i { width: 0; height: 0; border: solid transparent; }
  .vscroll .up { border-width: 0 3px 4px; border-bottom-color: #888; }
  .vscroll .down { border-width: 4px 3px 0; border-top-color: #888; }
  .status { display: flex; flex: none; height: 15px; line-height: 14px; border-top: 1px solid #999; }
  .status input { width: 47px; padding-left: 6px; background: #fff; }
  .clock { display: flex; align-items: center; padding: 0 4px 0 5px; border-right: 1px solid #777; }
  .status .info { width: 171px; text-align: center; border-right: 1px solid #777; }
  .status button { width: 14px; border-right: 1px solid #999; }
  .play { border: solid transparent; border-width: 5px 0 5px 5px; border-left-color: #000; }
  .hscroll { display: flex; flex: 1; align-items: center; justify-content: space-between; padding: 0 6px; background: linear-gradient(#e2e2e2, #f4f4f4 40%, #f0f0f0); }
  .hscroll .lt { border-width: 3px 4px 3px 0; border-right-color: #888; }
  .hscroll .rt { border-width: 3px 0 3px 4px; border-left-color: #888; }
  .nook { width: 16px; }

  /* collapsed dock */
  .dock { flex: none; width: 36px; }
  .dockgroup { display: flex; flex-direction: column; align-items: center; padding: 4px 0 2px; margin-bottom: 1px; background: #d6d6d6; border-right: 1px solid #555; box-shadow: inset 1px 1px #eee; }
  .dockgroup button { width: 30px; height: 30px; }
  .dockgroup .hgrip + button { margin-top: 3px; }
  .dockgroup :global(svg) { filter: drop-shadow(1px 1px 1px #aaa); }

  /* layers panel */
  .tabs { display: flex; flex: none; height: 17px; background: linear-gradient(#9c9c9c, #868686); border-bottom: 1px solid #555; }
  .tab { padding: 0 7px; border-right: 1px solid #5c5c5c; font: 600 10px/14px var(--bar); color: #333; }
  .tab.active { margin-bottom: -1px; background: linear-gradient(#ececec, #d6d6d6); color: #222; }
  .panel-menu { margin-left: auto; padding-right: 4px; }
  .layerscol { display: flex; flex-direction: column; flex: none; width: 275px; border-right: 1px solid #444; }
  .lp { display: flex; flex-direction: column; flex: 1; min-height: 0; padding: 0 2px; background: #d6d6d6; }
  .lrow { display: flex; align-items: center; flex: none; height: 26px; border-bottom: 1px solid #8c8c8c; padding: 0 2px 0 5px; color: #8e8e8e; white-space: nowrap; }
  .lrow.first { height: 25px; padding-left: 2px; }
  .lrow label { display: flex; align-items: center; gap: 4px; margin-left: auto; }
  .lrow input { width: 37px; height: 17px; padding-left: 4px; border: 1px solid #a5a5a5; background: #cfcfcf; box-shadow: inset 0 0 0 1px #e8e8e8; color: #777; }
  .nudge { width: 17px; height: 17px; border: 1px solid #a5a5a5; border-left: 0; background: #e2e2e2; }
  .nudge i { border: solid transparent; border-width: 3px 0 3px 3px; border-left-color: #888; }
  .blend { position: relative; flex: none; width: 165px; height: 18px; border: 1px solid #a8a8a8; background: #fff; }
  .blend select { display: block; width: 146px; height: 14px; margin: 1px; padding: 0 2px; border: 1px solid #ccc; color: #888; opacity: 1; }
  .blend::after { content: ""; position: absolute; right: 4px; top: 8px; border: solid transparent; border-width: 4px 4px 0; border-top-color: #888; }
  .locks { display: flex; align-items: center; gap: 6px; padding-left: 8px; opacity: .8; }
  .layerwrap, .chanwrap { display: flex; flex: 1; min-height: 0; }
  .layers, .channels { flex: 1; min-width: 0; }
  .layers li { display: flex; border-bottom: 1px solid #8c8c8c; }
  .eyecell { flex: none; width: 23px; padding: 2px 3px; border-right: 1px solid #8c8c8c; }
  .eye { width: 16px; height: 16px; border: 1px solid; border-color: #999 #f0f0f0 #f0f0f0 #999; }
  .lbody { flex: 1; min-width: 0; }
  .lmain { display: flex; align-items: center; height: 22px; padding-left: 3px; }
  .low .lmain { height: 21px; }
  .thumb { flex: none; display: flex; align-items: center; justify-content: center; border: 1px solid #000; background: #fff; font: 700 13px/14px "Liberation Serif", serif; color: #333; }
  .thumb.sq { width: 16px; height: 16px; }
  .thumb.wide { width: 32px; height: 14px; }
  .checker { background: conic-gradient(#ccc 25%, #fff 0 50%, #ccc 0 75%, #fff 0) 0 0/8px 8px; }
  .lmain > :global(svg) { margin: 0 4px 0 3px; }
  .lname { flex: 1; padding: 3px 0 0 8px; }
  .fx, .fxbtn em { font: italic 700 15px/16px "Liberation Serif", serif; color: #333; padding-right: 5px; }
  .fold { width: 11px; height: 22px; border-left: 1px solid #999; background: #cacaca; }
  .fold i { border: solid transparent; border-width: 0 3px 4px; border-bottom-color: #444; }
  .fxhead { display: flex; align-items: center; gap: 4px; height: 18px; margin-left: 19px; }
  .fxitem { display: flex; align-items: center; gap: 4px; height: 19px; margin-left: 33px; padding-left: 4px; border-top: 1px solid #8c8c8c; }
  .pfoot { display: flex; align-items: center; justify-content: flex-end; flex: none; gap: 15px; height: 18px; padding-right: 22px; border-top: 1px solid #8c8c8c; }
  .fxbtn em { color: #777; padding: 0; }

  /* right column */
  .sidecol { display: flex; flex-direction: column; flex: none; width: 273px; }
  .panel { flex: none; background: #d6d6d6; border-bottom: 3px solid #333; }
  .panel.grow { display: flex; flex: 1; flex-direction: column; min-height: 0; border: 0; }
  .color { display: grid; grid-template-columns: 38px 1fr; height: 98px; padding: 1px 4px 0 7px; align-content: start; }
  .chips { position: relative; width: 34px; height: 34px; margin: 8px 0 0 2px; }
  .chip { position: absolute; width: 20px; height: 20px; }
  .chip.front { left: 0; top: 0; background: #000; border: 1px solid #000; box-shadow: inset 0 0 0 1px #ddd; }
  .chip.back { left: 12px; top: 12px; background: #fff; border: 1px solid #999; }
  .ink { display: flex; align-items: center; height: 19px; }
  .ink label { width: 9px; margin: 0 -1px 4px 0; }
  .ink span { width: 11px; margin: 0 0 4px 1px; }
  .slide { flex: 1; height: 15px; margin-top: 1px;
    background: var(--track) center 1px/calc(100% - 9px) 4px no-repeat, linear-gradient(#888, #888) center 0/calc(100% - 7px) 6px no-repeat; }
  .slide.cyan { --track: linear-gradient(90deg, #440400, #000 70%); }
  .slide.magenta { --track: linear-gradient(90deg, #003018, #000 70%); }
  .slide.yellow { --track: linear-gradient(90deg, #000038, #000 70%); }
  .slide.black { --track: linear-gradient(90deg, #666, #000); }
  .slide::-webkit-slider-thumb { appearance: none; width: 9px; height: 8px; margin-top: 7px; background: url("data:image/svg+xml,%3Csvg xmlns='http://www.w3.org/2000/svg' width='9' height='8'%3E%3Cpath d='M4.500 .7L8.500 5v2.500h-8V5z' fill='%23fff' stroke='%23555'/%3E%3Cpath d='M1.500 6.500h6' stroke='%2321a021'/%3E%3C/svg%3E") no-repeat; }
  .num { width: 30px; height: 18px; margin-left: 2px; padding-left: 5px; background: #fff; border: 1px solid #e4e8f0; }
  .spectrum { grid-column: 1 / -1; display: flex; justify-content: flex-end; height: 15px; margin: 1px 33px 0 31px; background: linear-gradient(rgba(255, 255, 255, .85), transparent 45%, rgba(0, 0, 0, .75)), linear-gradient(90deg, #e0201c, #fff200 16%, #00a550 32%, #00aeef 49%, #2e3192 66%, #ec008c 82%, #d8201c); }
  .spectrum i { width: 8px; background: linear-gradient(#fff 50%, #000 50%); }

  .char { padding: 0 37px 0 3px; height: 193px; }
  .cr { border-bottom: 1px solid #8c8c8c; box-shadow: 0 1px #e8e8e8; }
  .fonts { display: flex; gap: 7px; padding: 6px 0 4px 16px; }
  .pick.family { width: 123px; }
  .pick.style { width: 73px; }
  .two { display: grid; grid-template-columns: 117px 117px; row-gap: 5px; padding: 5px 0 4px; }
  .metric { display: flex; align-items: center; height: 18px; }
  .glyph { display: flex; align-items: center; justify-content: center; width: 28px; padding-right: 3px; }
  .metric input { width: 55px; height: 18px; padding-left: 5px; background: #fff; border: 1px solid #b8bcc4; }
  .metric input:disabled { background: #d0d0d0; color: #888; }
  .drop { width: 18px; height: 18px; border: 1px solid #777; background: linear-gradient(#f4f4f4, #d4d4d4); }
  .drop .caret { border-width: 4px 4px 0; }
  .tight .metric input { border-color: #e4e8f0; height: 17px; }
  .tight { row-gap: 3px; padding: 4px 0 3px; }
  .tint { display: flex; align-items: center; justify-content: space-between; width: 100px; margin-left: -17px; }
  .tint button { width: 54px; height: 16px; border: 1px solid #999; background: #6879ab; }
  .faces { display: flex; gap: 5px; height: 31px; padding: 4px 0 0 26px; font: 14px/16px "Liberation Serif", serif; color: #222; }
  .faces button { min-width: 16px; text-shadow: 1px 1px 1px #aaa; }
  .faces .gap { margin-left: 9px; }
  .faces small { font-size: 11px; }
  .faces sup, .faces sub { font-size: 8px; line-height: 8px; }
  .lang { display: flex; align-items: center; border: 0; box-shadow: none; padding-top: 9px; }
  .pick.language { width: 134px; margin-right: 11px; }
  .pick.smooth { width: 54px; margin-left: 2px; }
  .pick.language select, .pick.smooth select { padding-left: 2px; }

  .para { padding: 0 37px 0 3px; height: 136px; }
  .justs { display: flex; padding: 6px 0 5px 18px; }
  .justs button { width: 25px; height: 20px; }
  .justs .on { border: 1px solid #555; border-radius: 3px; background: #c8c8c8; }
  .justs .gap { margin-left: 10px; }
  .hyphen { padding: 8px 0 0 9px; }

  .chanwrap { padding: 1px 2px 0 2px; }
  .channels { border-top: 1px solid #8c8c8c; }
  .channels li { display: flex; height: 23px; border-bottom: 1px solid #8c8c8c; }
  .chan { display: flex; flex: 1; align-items: center; padding: 0 10px 0 2px; background: #3399ff; color: #fff; }
  .chan b { flex: 1; padding: 0 0 3px 5px; font: 700 10px/14px var(--bar); }
  .chan > span:last-child { padding-bottom: 3px; }
  .pfoot.wide { gap: 18px; padding-right: 24px; margin-left: 2px; }
</style>
